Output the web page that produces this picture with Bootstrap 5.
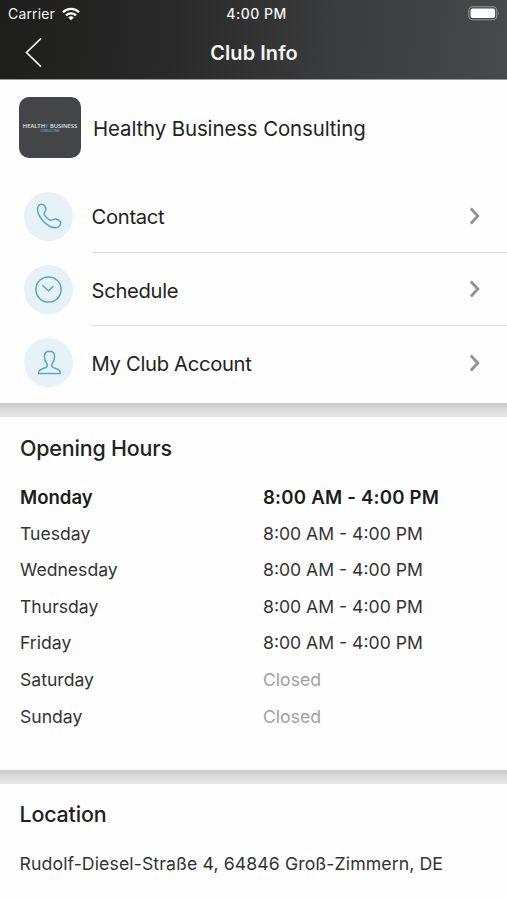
<!DOCTYPE html>
<html lang="en">
<head>
<meta charset="utf-8">
<meta name="viewport" content="width=device-width, initial-scale=1">
<title>Club Info</title>
<link href="https://cdn.jsdelivr.net/npm/bootstrap@5.3.0/dist/css/bootstrap.min.css" rel="stylesheet">
<style>
  body { font-family: Inter, "Liberation Sans", sans-serif; color: #222; background: #fefefe; height: 900px; overflow: hidden; }
  svg { display: block; flex: none; }
  .topbar { height: 80px; color: #f4f4f4; background: linear-gradient(95deg, #1d1d1c 0%, #2a2a2a 35%, #3a3b3c 65%, #48494c 100%); border-bottom: 1px solid #9b9b9b; }
  .statusbar { height: 27px; padding: 0 7px 0 8px; font-size: 14px; line-height: 27px; }
  .titlebar { height: 52px; padding: 0 24px; }
  .side { flex: 1 1 0; }
  .carrier { letter-spacing: .15px; margin-right: 7px; }
  .clock { font-weight: 500; letter-spacing: .5px; padding-left: 5px; }
  .screen-title { font-size: 19.9px; font-weight: 600; letter-spacing: .1px; line-height: 52px; padding-left: 1px; }
  .club { height: 99px; padding: 17px 19px 0; }
  .club-logo { width: 62px; height: 61px; border-radius: 10px; background: #434548; color: #e2e6ea; font-family: "Open Sans", sans-serif; }
  .logo-main { font-size: 5.8px; font-weight: 600; line-height: 6px; white-space: nowrap; }
  .logo-y { color: #4f93ab; }
  .logo-sub { font-size: 3px; line-height: 4px; color: #8cc4d6; }
  .club-name { font-size: 20.4px; letter-spacing: -.1px; padding-left: 12px; line-height: 63px; }
  .menu-row { height: 73.3px; padding-left: 24px; color: inherit; text-decoration: none; }
  .menu-icon { width: 49px; height: 49px; background: #e6f2f5; color: #55a9cb; }
  .menu-body { margin-left: 18.5px; padding-right: 26px; font-size: 20.2px; letter-spacing: -.3px; }
  .menu-label { padding-top: 4px; }
  .ruled { border-bottom: 1px solid #dfdfdf; }
  .menu { height: 224px; padding-top: .4px; }
  .band { height: 14px; background: linear-gradient(#c9c9c9, #d9d9d9 45%, #e3e3e3 75%, #e5e5e5); }
  .panel-title { font-size: 21.4px; font-weight: 500; letter-spacing: -.15px; line-height: 26px; margin: 0; }
  .hours { height: 353px; padding: 18px 20px 0; }
  .hour-list { padding-top: 18px; font-size: 17.6px; color: #333; }
  .hour-row { height: 36.6px; line-height: 36.4px; }
  .day { width: 243px; }
  .today { font-weight: 600; font-size: 18.6px; line-height: 36px; color: #1c1c1c; }
  .today-time { letter-spacing: .22px; }
  .shut { color: #a0a0a0; }
  .place { padding: 17px 19.5px 0; }
  .address { font-size: 17.7px; letter-spacing: .09px; line-height: 26px; margin: 24px 0 0; color: #333; white-space: nowrap; }
</style>
</head>
<body>
<header class="topbar">
  <div class="statusbar d-flex align-items-center">
    <div class="side d-flex align-items-center">
      <span class="carrier">Carrier</span>
      <svg width="18" height="14" viewBox="0 0 18 14" fill="none" stroke="#fff" stroke-width="2.3"><path d="M1 5.2a11.4 11.4 0 0 1 16 0M4 8.4a7.2 7.2 0 0 1 10 0"/><path d="M6.2 10.5a4.1 4.1 0 0 1 5.6 0L9 13.2z" fill="#fff" stroke="none"/></svg>
    </div>
    <span class="clock">4:00 PM</span>
    <div class="side d-flex justify-content-end">
      <svg width="32" height="15" viewBox="0 0 32 15"><rect x=".8" y=".8" width="28" height="13" rx="3.8" fill="none" stroke="#939496" stroke-width="1.1"/><rect x="2.5" y="2.5" width="24.6" height="9.6" rx="2" fill="#fff"/><path d="M30.3 5.2q1.5 2.1 0 4.2z" fill="#939496"/></svg>
    </div>
  </div>
  <div class="titlebar d-flex align-items-center">
    <div class="side">
      <svg width="18" height="30" viewBox="0 0 18 30" fill="none" stroke="#f2f2f2" stroke-width="1.7"><path d="M17 .5 2.500 14.500 17 28.700"/></svg>
    </div>
    <span class="screen-title">Club Info</span>
    <div class="side"></div>
  </div>
</header>

<main>
  <section>
    <div class="club d-flex align-items-start">
      <div class="club-logo d-flex flex-column align-items-center justify-content-center">
        <div class="logo-main">HEALTH<span class="logo-y">Y</span> BUSINESS</div>
        <div class="logo-sub">CONSULTING</div>
      </div>
      <div class="club-name">Healthy Business Consulting</div>
    </div>
    <nav class="menu">
      <a class="menu-row d-flex align-items-center" href="#">
        <span class="menu-icon rounded-circle d-flex align-items-center justify-content-center">
          <svg width="26" height="26" viewBox="0 0 26 26" fill="none" stroke="currentColor" stroke-width="1.5" stroke-linejoin="round"><path d="M1.800 4.300C2.400 2.300 4.200 1 5.800 1.200c2.100.3 3.400 2.100 4.100 4.200.7 2.300-2.200 3.600-1.700 5.800.5 1.900 4.200 5.700 6.300 6.100 1.800.3 3.200-1.500 5.100-1.300 1.800.2 3.900 1.400 4.700 2.600 1.200 2-.9 5.300-3.300 6-3.200.7-6.900-.7-9.800-3C7.700 19.100 4.300 15 2.600 11.100 1.700 8.900 1.200 6.400 1.800 4.300z"/></svg>
        </span>
        <span class="menu-body ruled flex-grow-1 h-100 d-flex align-items-center justify-content-between"><span class="menu-label">Contact</span>
          <svg width="12" height="18" viewBox="0 0 12 18" fill="none" stroke="#929292" stroke-width="2.8"><path d="m1.800 1.500 7 7.500-7 7.500"/></svg>
        </span>
      </a>
      <a class="menu-row d-flex align-items-center" href="#">
        <span class="menu-icon rounded-circle d-flex align-items-center justify-content-center">
          <svg width="27" height="27" viewBox="0 0 27 27" fill="none" stroke="currentColor" stroke-width="1.500"><circle cx="13.500" cy="13.500" r="12.600"/><path d="m7.300 9.200 6.200 5.500 4.900-4.600"/></svg>
        </span>
        <span class="menu-body ruled flex-grow-1 h-100 d-flex align-items-center justify-content-between"><span class="menu-label">Schedule</span>
          <svg width="12" height="18" viewBox="0 0 12 18" fill="none" stroke="#929292" stroke-width="2.8"><path d="m1.800 1.500 7 7.500-7 7.500"/></svg>
        </span>
      </a>
      <a class="menu-row d-flex align-items-center" href="#">
        <span class="menu-icon rounded-circle d-flex align-items-center justify-content-center">
          <svg width="26" height="26" viewBox="0 0 26 26" fill="none" stroke="currentColor" stroke-width="1.500" stroke-linejoin="round"><path d="M13.500 1.300c-3.200 0-5.100 2.200-5.100 5.200 0 2.800.9 5.200 2.300 6.900 1 1.300.8 3.100-.6 3.900-1.700 1-4.200 1.600-5.800 2.600-1.100.7-1.700 1.900-1.700 3.500h21.800c0-1.600-.6-2.800-1.700-3.500-1.600-1-4.100-1.600-5.800-2.600-1.400-.8-1.600-2.600-.6-3.900 1.400-1.700 2.300-4.100 2.300-6.900 0-3-1.900-5.200-5.100-5.200z"/></svg>
        </span>
        <span class="menu-body flex-grow-1 h-100 d-flex align-items-center justify-content-between"><span class="menu-label">My Club Account</span>
          <svg width="12" height="18" viewBox="0 0 12 18" fill="none" stroke="#929292" stroke-width="2.8"><path d="m1.800 1.500 7 7.500-7 7.500"/></svg>
        </span>
      </a>
    </nav>
  </section>

  <div class="band"></div>

  <section class="hours">
    <h2 class="panel-title">Opening Hours</h2>
    <div class="hour-list">
      <div class="hour-row today d-flex"><span class="day">Monday</span><span class="today-time">8:00 AM - 4:00 PM</span></div>
      <div class="hour-row d-flex"><span class="day">Tuesday</span><span>8:00 AM - 4:00 PM</span></div>
      <div class="hour-row d-flex"><span class="day">Wednesday</span><span>8:00 AM - 4:00 PM</span></div>
      <div class="hour-row d-flex"><span class="day">Thursday</span><span>8:00 AM - 4:00 PM</span></div>
      <div class="hour-row d-flex"><span class="day">Friday</span><span>8:00 AM - 4:00 PM</span></div>
      <div class="hour-row d-flex"><span class="day">Saturday</span><span class="shut">Closed</span></div>
      <div class="hour-row d-flex"><span class="day">Sunday</span><span class="shut">Closed</span></div>
    </div>
  </section>

  <div class="band"></div>

  <section class="place">
    <h2 class="panel-title">Location</h2>
    <p class="address">Rudolf-Diesel-Straße 4, 64846 Groß-Zimmern, DE</p>
  </section>
</main>
<script src="https://cdn.jsdelivr.net/npm/bootstrap@5.3.0/dist/js/bootstrap.bundle.min.js"></script>
</body>
</html>
